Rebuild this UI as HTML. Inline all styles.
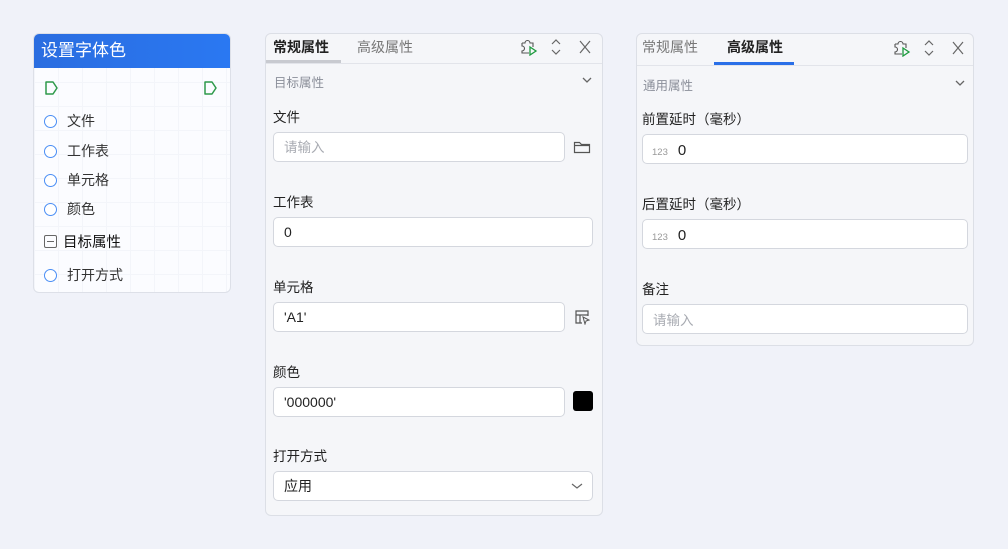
<!DOCTYPE html>
<html><head><meta charset="utf-8"><style>
*{box-sizing:border-box;margin:0;padding:0}
body{width:1008px;height:549px;background:#f0f2f9;font-family:"Liberation Sans","Noto Sans CJK SC",sans-serif;position:relative;overflow:hidden;color:#222}
.a{position:absolute}
.node{left:33px;top:33px;width:198px;height:260px;background:#fbfcff;border:1px solid #dde0e8;border-radius:6px;overflow:hidden;background-image:linear-gradient(#f3f5fa 1px,transparent 1px),linear-gradient(90deg,#f3f5fa 1px,transparent 1px);background-size:24px 24px}
.nh{position:absolute;left:0;top:0;width:100%;height:34px;background:linear-gradient(90deg,#2a6de0,#2a78f2);color:#fff;font-size:17px;line-height:34px;padding-left:7px}
.row{position:absolute;left:10px;font-size:14px;color:#333;display:flex;align-items:center}
.dot{width:13px;height:13px;border:1.5px solid #4a8ef5;border-radius:50%;margin-right:10px;background:#fff}
.panel{background:#f5f6f9;border:1px solid #dcdfe6;border-radius:6px}
.tab{position:absolute;top:3px;font-size:14px}
.lbl{position:absolute;font-size:13.5px;color:#222}
.inp{position:absolute;height:30px;background:#fff;border:1px solid #d4d7de;border-radius:5px;font-size:14px;line-height:28px;padding-left:10px;color:#222}
.ph{color:#a8abb2;font-size:13.5px}
.sec{position:absolute;font-size:12.5px;color:#8a8e99}
</style></head><body>
<div class="a node">
 <div class="nh">设置字体色</div>
 <svg class="a" style="left:10px;top:46px" width="16" height="16"><path d="M2 2h7l4 6-4 6H2z" fill="none" stroke="#2e9a4a" stroke-width="1.5" stroke-linejoin="round"/></svg>
 <svg class="a" style="left:169px;top:46px" width="16" height="16"><path d="M2 2h7l4 6-4 6H2z" fill="none" stroke="#2e9a4a" stroke-width="1.5" stroke-linejoin="round"/></svg>
 <div class="row" style="top:77px"><span class="dot"></span>文件</div>
 <div class="row" style="top:107px"><span class="dot"></span>工作表</div>
 <div class="row" style="top:136px"><span class="dot"></span>单元格</div>
 <div class="row" style="top:165px"><span class="dot"></span>颜色</div>
 <div class="row" style="top:197px;font-size:14.5px;color:#111"><span style="width:13px;height:13px;border:1.3px solid #666;border-radius:2px;margin-right:6px;position:relative;display:inline-block"><span style="position:absolute;left:2px;right:2px;top:5px;height:1.3px;background:#666"></span></span>目标属性</div>
 <div class="row" style="top:231px"><span class="dot"></span>打开方式</div>
</div>

<div class="a panel" style="left:265px;top:33px;width:338px;height:483px">
 <div class="tab" style="left:7px;font-weight:bold;color:#222">常规属性</div>
 <div class="tab" style="left:91px;color:#777">高级属性</div>
 <div class="a" style="left:0;top:26px;width:75px;height:3px;background:#c8cad0"></div>
 <div class="a" style="left:0;top:29px;width:336px;height:1px;background:#e2e4ea"></div>
 <svg class="a" style="left:253px;top:4px;width:80px;height:18px" viewBox="0 0 80 18"><path d="M3 5h3a2.5 2.5 0 1 1 5 0h3v4M3 5v3a2.5 2.5 0 1 1 0 5v2h7" fill="none" stroke="#555" stroke-width="1.1"/><path d="M11 9l6 4-6 4z" fill="none" stroke="#1d9a3e" stroke-width="1.3"/><path d="M33 6l4-4 4 4M33 12l4 4 4-4" fill="none" stroke="#666" stroke-width="1.2"/><path d="M61 3l10 12M71 3L61 15" stroke="#666" stroke-width="1.2"/></svg>
 <div class="sec" style="left:8px;top:38px">目标属性</div>
 <svg class="a" style="left:316px;top:42px" width="10" height="8"><path d="M1 2l4 4 4-4" fill="none" stroke="#666" stroke-width="1.3"/></svg>
 <div class="lbl" style="left:7px;top:72px">文件</div>
 <div class="inp" style="left:7px;top:98px;width:292px"><span class="ph">请输入</span></div>
 <svg class="a" style="left:307px;top:105px" width="18" height="16"><path d="M1.5 3.5v10h15v-8h-8l-2-2z M1.5 6.5h15" fill="none" stroke="#555" stroke-width="1.2"/></svg>
 <div class="lbl" style="left:7px;top:157px">工作表</div>
 <div class="inp" style="left:7px;top:183px;width:320px">0</div>
 <div class="lbl" style="left:7px;top:242px">单元格</div>
 <div class="inp" style="left:7px;top:268px;width:292px">'A1'</div>
 <svg class="a" style="left:308px;top:275px" width="16" height="16"><path d="M14 7V2H2v12h6M2 6h12M6 6v8" fill="none" stroke="#555" stroke-width="1.2"/><path d="M9 8l6 3-3 1-1 3z" fill="none" stroke="#555" stroke-width="1"/></svg>
 <div class="lbl" style="left:7px;top:327px">颜色</div>
 <div class="inp" style="left:7px;top:353px;width:292px">'000000'</div>
 <div class="a" style="left:307px;top:357px;width:20px;height:20px;background:#000;border-radius:3px"></div>
 <div class="lbl" style="left:7px;top:411px">打开方式</div>
 <div class="inp" style="left:7px;top:437px;width:320px">应用</div>
 <svg class="a" style="left:305px;top:448px" width="12" height="8"><path d="M1 2l5 4 5-4" fill="none" stroke="#666" stroke-width="1.2"/></svg>
</div>

<div class="a panel" style="left:636px;top:33px;width:338px;height:313px">
 <div class="tab" style="left:5px;color:#777">常规属性</div>
 <div class="tab" style="left:90px;font-weight:bold;color:#222">高级属性</div>
 <div class="a" style="left:77px;top:28px;width:80px;height:3px;background:#2a6fe8"></div>
 <div class="a" style="left:0;top:31px;width:336px;height:1px;background:#e2e4ea"></div>
 <svg class="a" style="left:255px;top:5px;width:80px;height:18px" viewBox="0 0 80 18"><path d="M3 5h3a2.5 2.5 0 1 1 5 0h3v4M3 5v3a2.5 2.5 0 1 1 0 5v2h7" fill="none" stroke="#555" stroke-width="1.1"/><path d="M11 9l6 4-6 4z" fill="none" stroke="#1d9a3e" stroke-width="1.3"/><path d="M33 6l4-4 4 4M33 12l4 4 4-4" fill="none" stroke="#666" stroke-width="1.2"/><path d="M61 3l10 12M71 3L61 15" stroke="#666" stroke-width="1.2"/></svg>
 <div class="sec" style="left:6px;top:41px">通用属性</div>
 <svg class="a" style="left:318px;top:45px" width="10" height="8"><path d="M1 2l4 4 4-4" fill="none" stroke="#666" stroke-width="1.3"/></svg>
 <div class="lbl" style="left:5px;top:74px">前置延时（毫秒）</div>
 <div class="inp" style="left:5px;top:100px;width:326px;font-size:15px;line-height:31px;padding-left:9px"><span style="font-size:9.5px;color:#999;margin-right:10px">123</span>0</div>
 <div class="lbl" style="left:5px;top:159px">后置延时（毫秒）</div>
 <div class="inp" style="left:5px;top:185px;width:326px;font-size:15px;line-height:31px;padding-left:9px"><span style="font-size:9.5px;color:#999;margin-right:10px">123</span>0</div>
 <div class="lbl" style="left:5px;top:244px">备注</div>
 <div class="inp" style="left:5px;top:270px;width:326px;line-height:31px"><span class="ph">请输入</span></div>
</div>
</body></html>
